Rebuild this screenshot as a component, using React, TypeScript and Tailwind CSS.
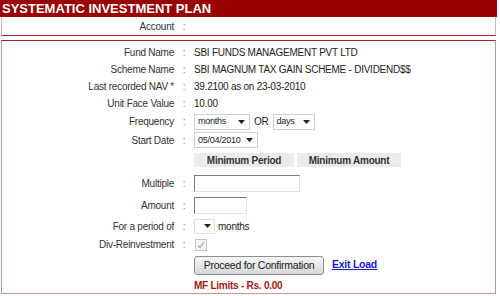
import type { ReactNode } from "react";

const Arrow = () => (
  <svg width="7" height="4" viewBox="0 0 7 4" className="shrink-0">
    <path d="M0 0 L7 0 L3.5 4 Z" fill="#222" />
  </svg>
);

const FakeSelect = ({ text, width }: { text: string; width: string }) => (
  <div
    className={`flex items-center justify-between h-[16px] border border-[#cfcfcf] bg-white pl-[3px] pr-[4px] ${width}`}
  >
    <span className="text-[9px] leading-none text-[#222]">{text}</span>
    <Arrow />
  </div>
);

const Row = ({
  label,
  h,
  children,
}: {
  label?: string;
  h: string;
  children?: ReactNode;
}) => (
  <div className={`grid grid-cols-[172px_20px_1fr] items-center ${h}`}>
    <div className="text-right text-[#333]">{label}</div>
    <div className="text-center text-[#777]">{label ? ":" : ""}</div>
    <div className="flex items-center">{children}</div>
  </div>
);

export default function App() {
  return (
    <div className="w-[500px] h-[296px] bg-white font-['Liberation_Sans',Arial,sans-serif] text-[10px] tracking-[-0.25px]">
      <div className="w-[497px] h-[17px] bg-[#990000] pl-[2px] flex items-center">
        <span className="text-white font-bold text-[13px] leading-none tracking-normal">
          SYSTEMATIC INVESTMENT PLAN
        </span>
      </div>

      <div className="ml-[1px] w-[495px] h-[19px] border-x border-x-[#d8b0b0] border-b border-b-[#a02828]">
        <Row label="Account" h="h-[18px]" />
      </div>

      <div className="ml-[1px] mt-[4px] w-[495px] h-[254px] border border-[#c49494] border-t-[#a02828] pt-[3px]">
        <Row label="Fund Name" h="h-[17px]">
          <span className="text-[#222]">SBI FUNDS MANAGEMENT PVT LTD</span>
        </Row>
        <Row label="Scheme Name" h="h-[17px]">
          <span className="text-[#222]">SBI MAGNUM TAX GAIN SCHEME - DIVIDEND$$</span>
        </Row>
        <Row label="Last recorded NAV *" h="h-[17px]">
          <span className="text-[#222]">39.2100 as on 23-03-2010</span>
        </Row>
        <Row label="Unit Face Value" h="h-[17px]">
          <span className="text-[#222]">10.00</span>
        </Row>
        <Row label="Frequency" h="h-[19px]">
          <FakeSelect text="months" width="w-[56px]" />
          <span className="mx-[4px] text-[#222]">OR</span>
          <FakeSelect text="days" width="w-[42px]" />
        </Row>
        <Row label="Start Date" h="h-[18px]">
          <FakeSelect text="05/04/2010" width="w-[64px]" />
        </Row>
        <Row h="h-[22px]">
          <div className="flex gap-[3px]">
            <div className="w-[100px] h-[14px] bg-[#ebebeb] flex items-center justify-center font-bold text-[#333]">
              Minimum Period
            </div>
            <div className="w-[104px] h-[14px] bg-[#ebebeb] flex items-center justify-center font-bold text-[#333]">
              Minimum Amount
            </div>
          </div>
        </Row>
        <Row label="Multiple" h="h-[24px]">
          <div className="w-[106px] h-[17px] bg-white border border-t-[#7a7a7a] border-l-[#7a7a7a] border-r-[#e2e2e2] border-b-[#e2e2e2]" />
        </Row>
        <Row label="Amount" h="h-[20px]">
          <div className="w-[53px] h-[17px] bg-white border border-t-[#7a7a7a] border-l-[#7a7a7a] border-r-[#e2e2e2] border-b-[#e2e2e2]" />
        </Row>
        <Row label="For a period of" h="h-[22px]">
          <div className="flex items-center justify-end w-[21px] h-[15px] border border-[#e0e0e0] pr-[3px]">
            <Arrow />
          </div>
          <span className="ml-[3px] text-[#222]">months</span>
        </Row>
        <Row label="Div-Reinvestment" h="h-[15px]">
          <div className="ml-[1px] w-[12px] h-[12px] border border-[#c4c4c4] bg-[#f4f4f4] flex items-center justify-center">
            <svg width="8" height="8" viewBox="0 0 8 8">
              <path d="M1 4.5 L3 6.5 L7 1" stroke="#a8a8a8" strokeWidth="1.2" fill="none" />
            </svg>
          </div>
        </Row>
        <Row h="h-[26px]">
          <button className="w-[130px] h-[19px] rounded-[3px] border border-[#8e8e8e] bg-gradient-to-b from-[#f6f6f6] to-[#d8d8d8] text-[10.5px] text-[#1a1a1a] leading-none">
            Proceed for Confirmation
          </button>
          <a className="ml-[8px] font-bold text-[#1a1acc] underline text-[10.5px]">Exit Load</a>
        </Row>
        <Row h="h-[15px]">
          <span className="font-bold text-[#a01818]">MF Limits - Rs. 0.00</span>
        </Row>
      </div>
    </div>
  );
}
